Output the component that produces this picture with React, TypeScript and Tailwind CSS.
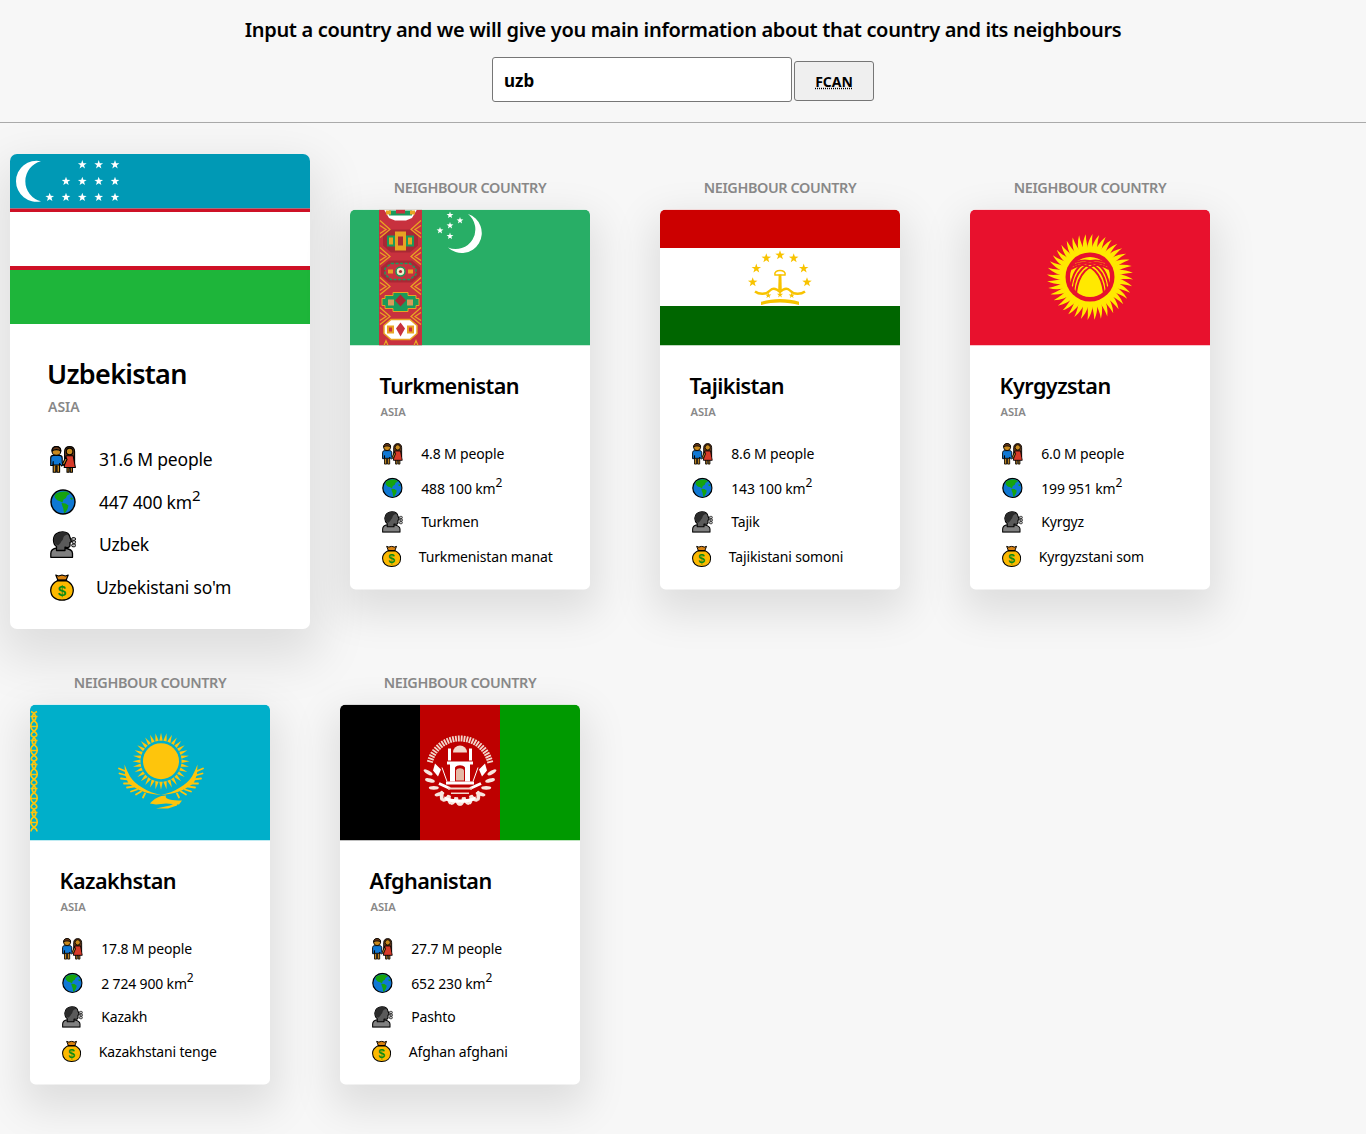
import type { ReactNode } from 'react';

function starPath(cx: number, cy: number, r: number) {
  const pts: string[] = [];
  for (let i = 0; i < 10; i++) {
    const rad = i % 2 === 0 ? r : r * 0.4;
    const a = (Math.PI / 5) * i - Math.PI / 2;
    pts.push(`${(cx + rad * Math.cos(a)).toFixed(2)},${(cy + rad * Math.sin(a)).toFixed(2)}`);
  }
  return `M${pts.join('L')}Z`;
}

function UzbekFlag() {
  const rows: [number, number[]][] = [
    [10.7, [72.3, 88.7, 105]],
    [27.3, [56, 72.3, 88.7, 105]],
    [43.3, [39.7, 56, 72.3, 88.7, 105]],
  ];
  return (
    <svg viewBox="0 0 300 170" className="block h-[170px] w-full">
      <rect width="300" height="54.5" fill="#0099b5" />
      <rect y="54.5" width="300" height="3.5" fill="#ce1126" />
      <rect y="58" width="300" height="54" fill="#fff" />
      <rect y="112" width="300" height="4" fill="#ce1126" />
      <rect y="116" width="300" height="54" fill="#1eb53a" />
      <path d="M31 7.2A20.5 20.5 0 1 0 31 47.2A20.6 20.6 0 0 1 31 7.2Z" fill="#fff" />
      {rows.map(([y, xs]) => xs.map((x) => <path key={`${x}-${y}`} d={starPath(x, y, 4.6)} fill="#fff" />))}
    </svg>
  );
}

function TurkmenFlag() {
  const crossYs = [19, 46, 76, 106];
  return (
    <svg viewBox="0 0 240 136" className="block h-[170px] w-full">
      <rect width="240" height="136" fill="#28ae66" />
      <rect x="29" width="43" height="136" fill="#c8313e" />
      {crossYs.map((y) => (
        <g key={y} fill="none" stroke="#e8a323" strokeWidth="1.3">
          <path d={`M30 ${y - 8}L40 ${y + 1}L30 ${y + 9}M71 ${y - 8}L61 ${y + 1}L71 ${y + 9}`} />
          <path d={`M30 ${y - 3}L36 ${y + 1}L30 ${y + 5}M71 ${y - 3}L65 ${y + 1}L71 ${y + 5}`} />
        </g>
      ))}
      <path d="M34 0H67L62 8.5L56 11H45L39 8.5Z" fill="#fff" />
      <rect x="39" y="1" width="23" height="5" fill="#1a9a5c" />
      <rect x="46" y="0" width="9" height="4" fill="#c8313e" />
      <rect x="36" y="1" width="5" height="4" fill="#e8a323" />
      <rect x="60" y="1" width="5" height="4" fill="#e8a323" />
      <path d="M41 20H60L68 27V36L60 43H41L33 36V27Z" fill="#a92834" />
      <rect x="37" y="26" width="27" height="11" fill="#1a9a5c" />
      <rect x="45" y="22" width="11" height="19" fill="#e8a323" />
      <rect x="48" y="27" width="5" height="9" fill="#a92834" />
      <rect x="39" y="28" width="4" height="7" fill="#e8a323" />
      <rect x="58" y="28" width="4" height="7" fill="#e8a323" />
      <path d="M39 51H62L70 58V66L62 73H39L31 66V58Z" fill="#a92834" />
      <path d="M41 54H60L66 59V65L60 70H41L35 65V59Z" fill="#c8313e" stroke="#1a9a5c" strokeWidth="1.5" strokeDasharray="3 1.5" />
      <circle cx="50.5" cy="62" r="4.5" fill="#f4e9c9" stroke="#1a9a5c" strokeWidth="1.5" />
      <circle cx="50.5" cy="62" r="1.6" fill="#a92834" />
      <rect x="38" y="60" width="5" height="4" fill="#e8a323" />
      <rect x="58" y="60" width="5" height="4" fill="#e8a323" />
      <path d="M43 83H58V86H66V89H69V96H66V99H58V102H43V99H35V96H32V89H35V86H43Z" fill="#1a9a5c" stroke="#e8a323" strokeWidth="1" />
      <path d="M50.5 85L56 91L50.5 97L45 91Z" fill="#a92834" />
      <rect x="38" y="90" width="6" height="6" fill="#d79b5a" />
      <rect x="57" y="90" width="6" height="6" fill="#d79b5a" />
      <path d="M41 110H60L67 116V124L60 130H41L34 124V116Z" fill="#fff" stroke="#e8a323" strokeWidth="1.5" />
      <rect x="37" y="116" width="7" height="8" fill="#e8a323" />
      <rect x="57" y="116" width="7" height="8" fill="#e8a323" />
      <path d="M50.5 113L55 119L50.5 127L46 119Z" fill="#c8313e" />
      <rect x="39" y="118" width="3" height="4" fill="#c8313e" />
      <rect x="59" y="118" width="3" height="4" fill="#c8313e" />
      <path d="M34 136L36 131L38 136M64 136L66 131L68 136" fill="none" stroke="#e8a323" strokeWidth="1.2" />
      <path d="M118 4.5A20 20 0 1 1 98 38A19.7 19.7 0 0 0 118 4.5Z" fill="#fff" />
      {[[100, 5.7], [110, 11], [100, 16], [90, 21], [100, 26.7]].map(([x, y]) => (
        <path key={`${x}-${y}`} d={starPath(x, y, 3.6)} fill="#fff" />
      ))}
    </svg>
  );
}

function TajikFlag() {
  const gold = '#f8c300';
  return (
    <svg viewBox="0 0 240 136" className="block h-[170px] w-full">
      <rect width="240" height="38.5" fill="#cc0000" />
      <rect y="38.5" width="240" height="58" fill="#fff" />
      <rect y="96.5" width="240" height="39.5" fill="#006600" />
      {[[120, 45.7], [106.3, 48.7], [133.7, 48.7], [96.3, 59], [143.7, 59], [92.7, 72.7], [147, 72.7]].map(([x, y]) => (
        <path key={`${x}-${y}`} d={starPath(x, y, 5)} fill={gold} />
      ))}
      {[[108.3, 86], [120, 85.3], [131.7, 86]].map(([x, y]) => (
        <path key={`${x}-${y}`} d={starPath(x, y, 3.2)} fill={gold} />
      ))}
      <path d="M115 65.5C113 59.5 127 59.5 125 65.5Z" fill="none" stroke={gold} strokeWidth="1.6" />
      <path d="M118.6 65L118.2 81H121.8L121.4 65Z" fill={gold} />
      <path d="M95 82C99 85 106 85.5 110 81C113 78 116 78.5 120 82.5C124 78.5 127 78 130 81C134 85.5 141 85 145 82" fill="none" stroke={gold} strokeWidth="2.4" />
      <path d="M101 95.5V92.3C112 88.5 128 88.5 139 92.3V95.5C128 92 112 92 101 95.5Z" fill={gold} />
    </svg>
  );
}

function KyrgyzFlag() {
  const rays = Array.from({ length: 40 }, (_, i) => i * 9);
  return (
    <svg viewBox="0 0 240 136" className="block h-[170px] w-full">
      <rect width="240" height="136" fill="#e8112d" />
      <g transform="translate(120 67.5)">
        {rays.map((deg) => (
          <path key={deg} transform={`rotate(${deg})`} d="M-3.2 -23.5C-3 -31 -1.5 -37 2.5 -43C1.5 -36 2.5 -30 3.2 -23.5Z" fill="#ffe900" />
        ))}
        <circle r="25.5" fill="#ffe900" />
        <circle r="24.5" fill="#e8112d" />
        <circle r="20" fill="#ffe900" />
        <g fill="none" stroke="#e8112d" strokeWidth="2">
          <path d="M-19 -8C-8 -14 -3 -13 5 -6C11 0 13 8 14 16" />
          <path d="M-17 -11.5C-7 -16 1 -15 8 -8C14 -2 16 6 16.5 13" />
          <path d="M-14 -15C-5 -18 3 -17 11 -10C16 -5 18 2 19 8" />
          <path d="M19 -8C8 -14 3 -13 -5 -6C-11 0 -13 8 -14 16" />
          <path d="M17 -11.5C7 -16 -1 -15 -8 -8C-14 -2 -16 6 -16.5 13" />
          <path d="M14 -15C5 -18 -3 -17 -11 -10C-16 -5 -18 2 -19 8" />
        </g>
      </g>
    </svg>
  );
}

function KazakhFlag() {
  const gold = '#fec50c';
  const rays = Array.from({ length: 32 }, (_, i) => i * 11.25);
  const orn = [7, 31, 55, 79, 103];
  const feathers = [
    [96, 67, 89, 64],
    [97, 71, 89.5, 69],
    [99, 75, 91, 74],
    [101, 79, 94, 79],
    [104, 82, 97, 83],
    [107, 85, 101, 87],
    [111, 87, 106, 90],
    [115, 89, 113, 93],
  ];
  return (
    <svg viewBox="0 0 240 136" className="block h-[170px] w-full">
      <rect width="240" height="136" fill="#00afca" />
      {orn.map((y) => (
        <g key={y} fill="none" stroke={gold} strokeWidth="1.6">
          <path d={`M1 ${y}C7 ${y + 3} 7 ${y + 8} 3 ${y + 10}C0 ${y + 12} 0 ${y + 17} 3 ${y + 19}C6 ${y + 21} 7 ${y + 22} 7 ${y + 24}`} />
          <path d={`M7 ${y}C1 ${y + 3} 1 ${y + 8} 5 ${y + 10}C8 ${y + 12} 8 ${y + 17} 5 ${y + 19}C2 ${y + 21} 1 ${y + 22} 1 ${y + 24}`} />
          <path d={`M0.5 ${y + 5}H7.5M0.5 ${y + 15}H7.5`} />
        </g>
      ))}
      <g transform="translate(131 56.7)">
        {rays.map((deg) => (
          <path key={deg} transform={`rotate(${deg})`} d="M-1.7 -20.5L0 -28.5L1.7 -20.5Z" fill={gold} />
        ))}
        <circle r="18" fill={gold} />
      </g>
      <path d="M94.5 60L97 66L100 72C105 80 118 88 131 90.5C118 90 105 85 98 78L95 70Z" fill={gold} />
      <path d="M167.5 60L165 66L162 72C157 80 144 88 131 90.5C144 90 157 85 164 78L167 70Z" fill={gold} />
      {feathers.map(([x1, y1, x2, y2]) => (
        <g key={x1} stroke={gold} strokeWidth="1.8" strokeLinecap="round">
          <path d={`M${x1} ${y1}L${x2} ${y2}`} />
          <path d={`M${262 - x1} ${y1}L${262 - x2} ${y2}`} />
        </g>
      ))}
      <path d="M120 99C124 94 130 91 136 91C134 95 142 96 152 96L149 100L136 99L126 100Z" fill={gold} />
      <path d="M126 104L140 101L148 97L147 101L138 104Z" fill={gold} />
    </svg>
  );
}

function AfghanFlag() {
  const dashes = Array.from({ length: 30 }, (_, i) => -75 + i * 5.2);
  const leaves = [0, 1, 2, 3, 4, 5, 6, 7, 8];
  const rim = '#f3d8cc';
  return (
    <svg viewBox="0 0 240 136" className="block h-[170px] w-full">
      <rect width="80" height="136" fill="#000" />
      <rect x="80" width="80" height="136" fill="#be0000" />
      <rect x="160" width="80" height="136" fill="#009900" />
      <g transform="translate(120 65)">
        {dashes.map((deg) => (
          <rect key={deg} transform={`rotate(${deg}) translate(-0.9 -34)`} width="1.8" height="6" fill={rim} />
        ))}
        {leaves.map((i) => (
          <g key={i} fill="#f8e6de">
            <ellipse transform={`rotate(${-95 - i * 15}) translate(0 -32) rotate(35)`} rx="1.9" ry="5" />
            <ellipse transform={`rotate(${95 + i * 15}) translate(0 -32) rotate(-35)`} rx="1.9" ry="5" />
          </g>
        ))}
        <path d="M-21 14L-10 19M21 14L10 19" stroke="#fff" strokeWidth="3" />
        <path d="M-25 -6L-19 0L-22 7L-27 1ZM25 -6L19 0L22 7L27 1Z" fill="#fff" />
        <path d="M-18 -2L-13 12M18 -2L13 12" stroke="#fff" strokeWidth="1" />
        <path d="M-7 -17A7 7 0 0 1 7 -17Z" fill={rim} />
        <rect x="-12" y="-21" width="3" height="12" fill="#fff" />
        <rect x="9" y="-21" width="3" height="12" fill="#fff" />
        <path d="M-13 -8H13V-5H10V12H5V-2C3 -5 -3 -5 -5 -2V12H-10V-5H-13Z" fill="#fff" />
        <path d="M-4 11V1C-3 -2 3 -2 4 1V11Z" fill="#e4b9a5" />
        <rect x="-14" y="12" width="28" height="3" fill="#fff" />
        <path d="M-12 18H12V20H-12ZM-9 23H9V24.5H-9Z" fill={rim} />
        <path d="M-16 27C-8 31 8 31 16 27L14 31C6 34 -6 34 -14 31Z" fill="#fff" />
      </g>
    </svg>
  );
}

function CoupleIcon() {
  return (
    <svg viewBox="0 0 26 27" className="h-[27px] w-[26px] shrink-0">
      <g stroke="#000" strokeWidth="1.1" strokeLinejoin="round">
        <path d="M3.2 26.3V18H9.6V26.3H7V20H5.8V26.3Z" fill="#c98a1f" />
        <path d="M0.7 19.5V12C0.7 10.2 2 9.4 3.5 9.4H9.3C11 9.4 12.2 10.4 12.2 12V16.5L13.5 18.2L11.6 20L9.6 17.5V19H3.2V15.5L2.8 19.5Z" fill="#0f78d4" />
        <circle cx="6.4" cy="5" r="4.4" fill="#c98a1f" />
        <path d="M2 5C2 2 4 0.6 6.4 0.6C8.8 0.6 10.8 2 10.8 5C9.5 3.8 8 3.6 6.4 3.6C4.8 3.6 3.3 3.8 2 5Z" fill="#6b3a1a" />
        <path d="M14.6 17V5.8C14.6 2.5 16.8 0.6 19.6 0.6C22.4 0.6 24.6 2.5 24.6 5.8V17Z" fill="#6b3a1a" />
        <path d="M17 26.3V20H22.4V26.3H20.3V22H19V26.3Z" fill="#c98a1f" />
        <path d="M14.2 21.5L16 9.8H23.2L25.4 21.5Z" fill="#d83b2a" />
        <path d="M12.4 18L15.8 11L17 13.5L14 19.5Z" fill="#c98a1f" />
        <circle cx="19.6" cy="5.4" r="3.3" fill="#c98a1f" />
      </g>
    </svg>
  );
}

function GlobeIcon() {
  return (
    <svg viewBox="0 0 26 26" className="h-[26px] w-[26px] shrink-0">
      <circle cx="13" cy="13" r="12" fill="#0f78d4" stroke="#000" strokeWidth="1.5" />
      <path d="M6 4.5C9 3 14 2 17.5 3L20 5L17 6.5L16 9L13.5 10.5L12.5 13.5L9.5 12C7 11.5 5.5 9.5 4.5 8C4.5 6.5 5 5.5 6 4.5Z" fill="#16a30e" />
      <path d="M11.5 14L15.5 14.5L18.5 16.5L17.5 20L15.5 23.5L14 24C13.5 21.5 13.5 19 12.5 17.5Z" fill="#16a30e" />
      <path d="M20 9L22 8.5L23 10L21.5 11Z" fill="#16a30e" />
    </svg>
  );
}

function SpeakingIcon() {
  return (
    <svg viewBox="0 0 26 27" className="h-[27px] w-[26px] shrink-0">
      <path d="M0.8 26.3V22.5C0.8 19 3.5 17.5 7 17H14C18.5 17.5 22.5 19 22.5 22.5V26.3Z" fill="#808080" stroke="#000" strokeWidth="1.3" strokeLinejoin="round" />
      <path d="M3.5 9C3.5 3.5 8 0.8 12.5 0.8C16.5 0.8 19.5 3 20 6.5L21.5 10.5L20 11.5V14.5C20 16 18.5 16.8 16.5 16.5L15 16.2V19.5H6.5V15.5C4.3 14 3.5 11.5 3.5 9Z" fill="#5a5a5a" stroke="#000" strokeWidth="1.3" strokeLinejoin="round" />
      <path d="M3.8 9C3.8 3.5 8.5 1.2 12.5 1.2C15 1.2 17 2 18.2 3.5C15 3.8 13.5 5 13 8C12.8 9.5 11 10 10.5 12L8 14.5C5 13.5 3.8 11.5 3.8 9Z" fill="#2b2b2b" />
      <g fill="#bdbdbd" stroke="#000" strokeWidth="0.9">
        <rect x="21.6" y="6.6" width="4" height="2.8" rx="1.4" />
        <rect x="22.2" y="9.8" width="3.6" height="2.8" rx="1.4" />
        <rect x="21.6" y="13" width="4" height="2.8" rx="1.4" />
      </g>
    </svg>
  );
}

function MoneyIcon() {
  return (
    <svg viewBox="0 0 24 27" className="h-[27px] w-[24px] shrink-0">
      <path d="M5.8 1L8.5 2L12 1L15.5 2L18.2 1L16 6.5H8Z" fill="#d9820f" stroke="#000" strokeWidth="1.2" strokeLinejoin="round" />
      <path d="M8 6.3H16C20.5 8.5 23.3 12 23.3 16C23.3 22.5 18.5 26.2 12 26.2C5.5 26.2 0.7 22.5 0.7 16C0.7 12 3.5 8.5 8 6.3Z" fill="#fcb900" stroke="#000" strokeWidth="1.3" strokeLinejoin="round" />
      <path d="M7.5 6.5H16.5" stroke="#000" strokeWidth="1.8" />
      <text x="12" y="21.5" textAnchor="middle" fontSize="15" fontWeight="700" fill="#0c8a17" fontFamily="'Liberation Sans', sans-serif">$</text>
    </svg>
  );
}

function StatRow({ icon, gap, children }: { icon: ReactNode; gap: string; children: ReactNode }) {
  return (
    <div className="mb-[15.5px] flex h-[27px] items-center pl-[2px] last:mb-0">
      {icon}
      <span className={`${gap} text-[17.5px] tracking-[-0.2px] text-black`}>{children}</span>
    </div>
  );
}

interface CountryData {
  name: string;
  people: string;
  area: string;
  language: string;
  currency: string;
  flag: ReactNode;
}

const countries: CountryData[] = [
  { name: 'Turkmenistan', people: '4.8', area: '488 100', language: 'Turkmen', currency: 'Turkmenistan manat', flag: <TurkmenFlag /> },
  { name: 'Tajikistan', people: '8.6', area: '143 100', language: 'Tajik', currency: 'Tajikistani somoni', flag: <TajikFlag /> },
  { name: 'Kyrgyzstan', people: '6.0', area: '199 951', language: 'Kyrgyz', currency: 'Kyrgyzstani som', flag: <KyrgyzFlag /> },
  { name: 'Kazakhstan', people: '17.8', area: '2 724 900', language: 'Kazakh', currency: 'Kazakhstani tenge', flag: <KazakhFlag /> },
  { name: 'Afghanistan', people: '27.7', area: '652 230', language: 'Pashto', currency: 'Afghan afghani', flag: <AfghanFlag /> },
];

function CountryCard({ data }: { data: CountryData }) {
  return (
    <article className="w-[300px] overflow-hidden rounded-[7px] bg-white shadow-[0_20px_50px_10px_rgba(0,0,0,0.1)]">
      {data.flag}
      <div className="pt-7 pr-4 pb-[28.5px] pl-[38px]">
        <h3 className="-ml-px text-[27px] leading-[44px] font-semibold tracking-[-0.7px] text-black">{data.name}</h3>
        <h4 className="mb-7 text-[14px] leading-[22px] font-semibold text-[#888]">ASIA</h4>
        <StatRow icon={<CoupleIcon />} gap="ml-[23px]">{data.people} M people</StatRow>
        <StatRow icon={<GlobeIcon />} gap="ml-[23px]">
          {data.area} km<sup className="text-[15px]">2</sup>
        </StatRow>
        <StatRow icon={<SpeakingIcon />} gap="ml-[23px]">{data.language}</StatRow>
        <StatRow icon={<MoneyIcon />} gap="ml-[22px]">{data.currency}</StatRow>
      </div>
    </article>
  );
}

function NeighbourCard({ data }: { data: CountryData }) {
  return (
    <div className="relative mt-2 mr-2.5 w-[300px] scale-[0.8]">
      <span className="absolute -top-10 left-0 w-full text-center text-[18px] leading-6 font-semibold tracking-[-0.5px] text-[#888] uppercase">
        Neighbour country
      </span>
      <CountryCard data={data} />
    </div>
  );
}

export default function App() {
  const uzbekistan: CountryData = {
    name: 'Uzbekistan',
    people: '31.6',
    area: '447 400',
    language: 'Uzbek',
    currency: "Uzbekistani so'm",
    flag: <UzbekFlag />,
  };

  return (
    <div className="min-h-screen bg-[#f7f7f7] font-['Noto_Sans',sans-serif] text-black">
      <header className="h-[123px] border-b border-[#aaa] pt-[16px]">
        <h1 className="text-center text-[20px] leading-[28px] font-semibold tracking-[-0.33px]">
          Input a country and we will give you main information about that country and its neighbours
        </h1>
        <form className="mt-[13px] flex items-start justify-center gap-[2px]">
          <input
            readOnly
            value="uzb"
            className="h-[45px] w-[300px] rounded-[3px] border border-[#767676] bg-white px-[11px] pt-[2px] text-[17px] font-bold text-black outline-none"
          />
          <button
            type="button"
            className="mt-1 h-10 w-20 rounded-[3px] border border-[#767676] bg-[#efefef] pt-px text-[14px] font-bold text-black"
          >
            <span className="underline decoration-dotted">FCAN</span>
          </button>
        </form>
      </header>
      <main className="flex flex-wrap gap-y-3 pt-[31px]">
        <div className="mx-2.5">
          <CountryCard data={uzbekistan} />
        </div>
        {countries.map((c) => (
          <NeighbourCard key={c.name} data={c} />
        ))}
      </main>
    </div>
  );
}
